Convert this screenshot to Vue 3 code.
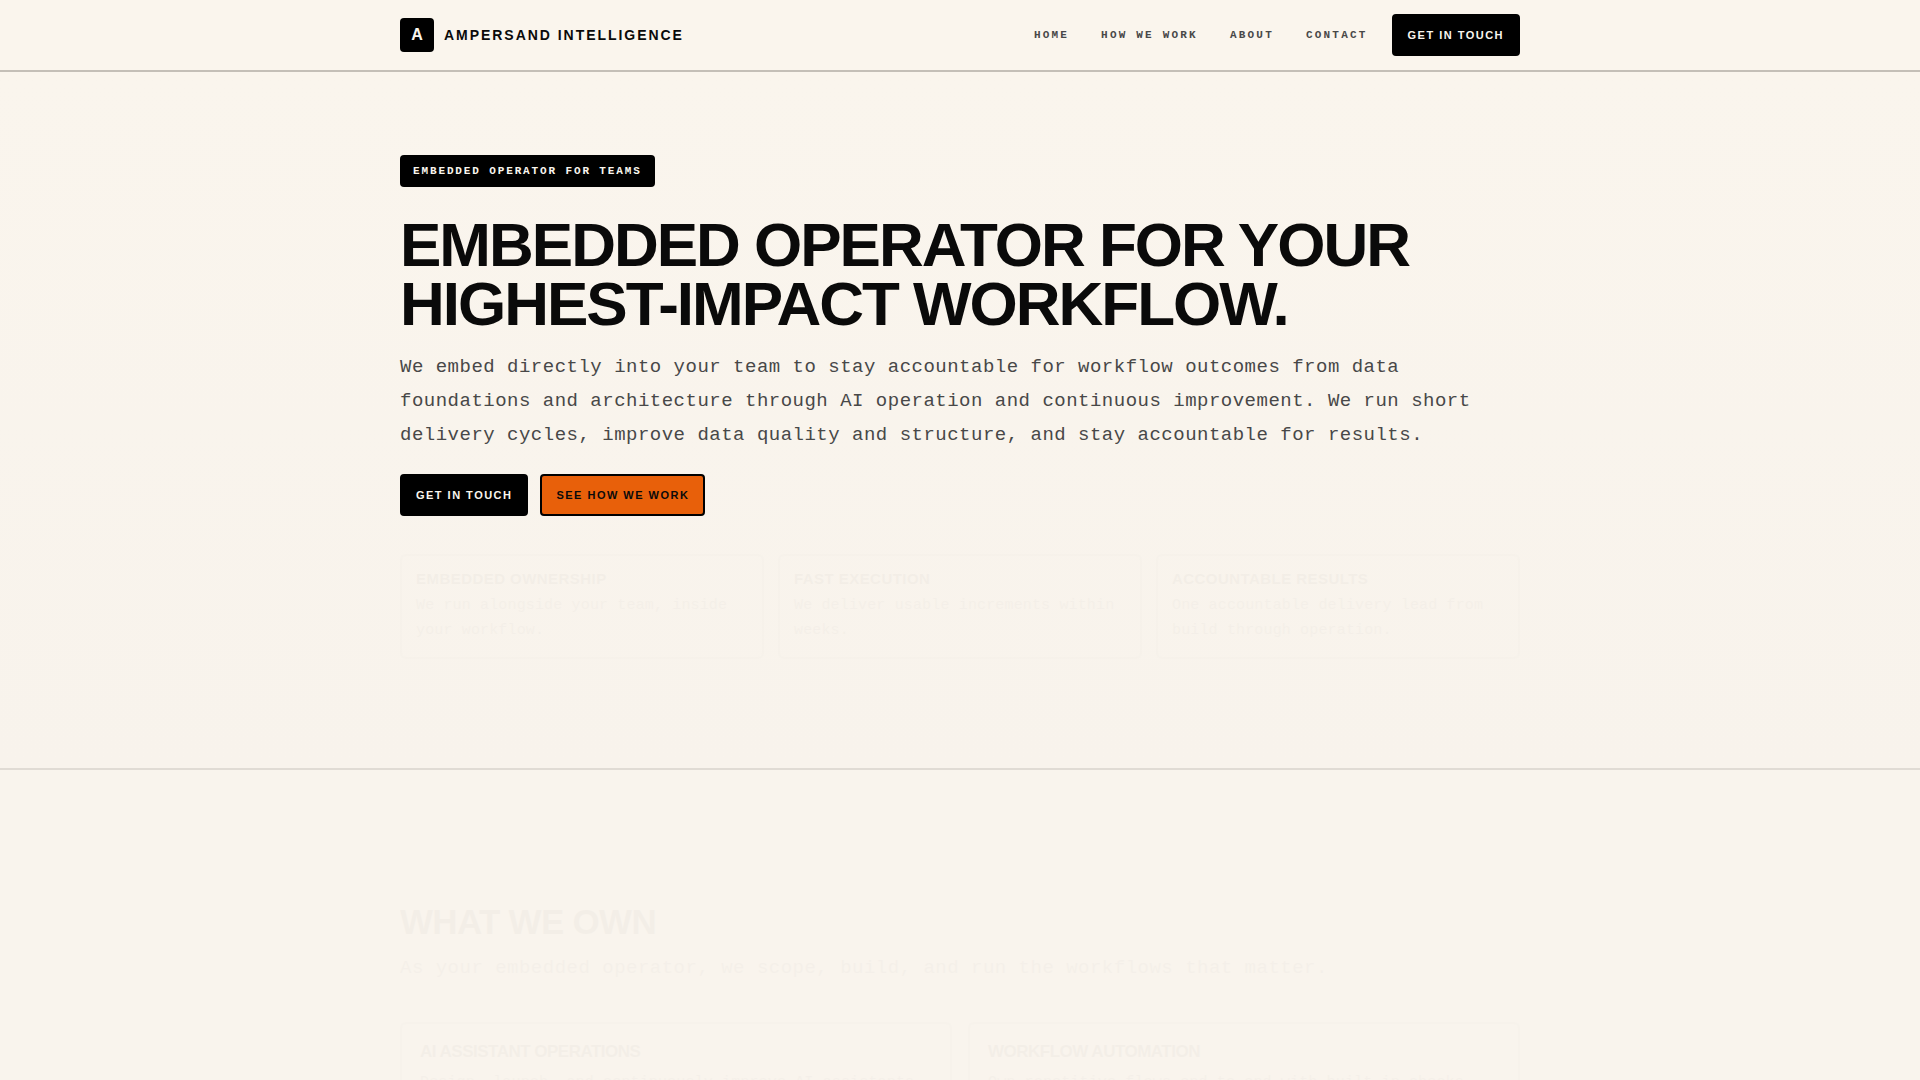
<script setup>
const links = ['Home', 'How we work', 'About', 'Contact']
const points = [
  { title: 'Embedded ownership', text: 'We run alongside your team, inside your workflow.' },
  { title: 'Fast execution', text: 'We deliver usable increments within weeks.' },
  { title: 'Accountable results', text: 'One accountable delivery lead from build through operation.' },
]
const services = [
  { title: 'AI assistant operations', text: 'Design, launch, and continuously improve AI assistants.' },
  { title: 'Workflow automation', text: 'Own repetitive flows end-to-end with built-in checks.' },
]
</script>

<template>
  <div class="page">
    <header class="header">
      <div class="container bar">
        <a class="brand" href="#">
          <span class="mark">A</span>
          <span class="name">Ampersand Intelligence</span>
        </a>
        <nav class="nav">
          <div class="links">
            <a v-for="link in links" :key="link" href="#">{{ link }}</a>
          </div>
          <button class="btn" type="button">Get in touch</button>
        </nav>
      </div>
    </header>
    <main>
      <section class="hero">
        <div class="container">
          <p class="badge">Embedded operator for teams</p>
          <h1>Embedded operator for your highest-impact workflow.</h1>
          <p class="lead">
            We embed directly into your team to stay accountable for workflow outcomes from data
            foundations and architecture through AI operation and continuous improvement. We run short
            delivery cycles, improve data quality and structure, and stay accountable for results.
          </p>
          <div class="actions">
            <button class="btn" type="button">Get in touch</button>
            <button class="btn accent" type="button">See how we work</button>
          </div>
          <div class="points reveal">
            <article v-for="p in points" :key="p.title" class="point">
              <h3>{{ p.title }}</h3>
              <p>{{ p.text }}</p>
            </article>
          </div>
        </div>
      </section>
      <section class="own">
        <div class="container reveal">
          <h2>What we own</h2>
          <p class="lead">As your embedded operator, we scope, build, and run the workflows that matter.</p>
          <div class="services">
            <article v-for="s in services" :key="s.title" class="service">
              <h3>{{ s.title }}</h3>
              <p>{{ s.text }}</p>
            </article>
          </div>
        </div>
      </section>
    </main>
  </div>
</template>

<style>
body {
  margin: 0;
  background: #f9f4ed;
}
</style>

<style scoped>
.page {
  height: 100vh;
  overflow: hidden;
  color: #0a0a0a;
  font-family: "Liberation Sans", Arial, sans-serif;
}
.container {
  box-sizing: border-box;
  max-width: 1168px;
  margin: 0 auto;
  padding: 0 24px;
}
h1, h2, h3, p {
  margin: 0;
}
h1, h2, h3, .name, .links, .badge, .btn {
  text-transform: uppercase;
}
.header {
  border-bottom: 2px solid #c4bfb7;
  background: #faf5ed;
}
.bar {
  display: flex;
  align-items: center;
  justify-content: space-between;
  height: 70px;
}
.brand {
  display: flex;
  align-items: center;
  gap: 10px;
  color: inherit;
  font-weight: 700;
  text-decoration: none;
}
.mark {
  display: grid;
  place-items: center;
  width: 34px;
  height: 34px;
  border-radius: 4px;
  background: #000;
  color: #faf6ee;
  font-size: 16px;
}
.name {
  font-size: 14px;
  letter-spacing: 0.14em;
}
.nav {
  display: flex;
  align-items: center;
  gap: 24px;
}
.links {
  display: flex;
  gap: 32px;
}
.links a {
  color: #484848;
  font: 700 11px/20px "Liberation Mono", monospace;
  letter-spacing: 0.2em;
  text-decoration: none;
}
.btn {
  height: 42px;
  padding: 0 14px;
  border: 2px solid #000;
  border-radius: 4px;
  background: #000;
  color: #faf6ee;
  font: 700 11px/20px "Liberation Sans", Arial, sans-serif;
  letter-spacing: 0.135em;
}
.accent {
  background: #e8600a;
  color: #0a0a0a;
}
.hero {
  padding: 83px 0 109px;
  border-bottom: 2px solid #e0dbd4;
  background: linear-gradient(#faf5ed, #f8f3ec);
}
.badge {
  width: fit-content;
  padding: 6px 13px;
  border-radius: 4px;
  background: #000;
  color: #faf6ee;
  font: 700 11px/20px "Liberation Mono", monospace;
  letter-spacing: 0.17em;
}
h1 {
  margin-top: 28px;
  font-size: 62px;
  line-height: 59px;
  letter-spacing: -2px;
}
.lead {
  color: #484848;
  font: 19px/34px "Liberation Mono", monospace;
  letter-spacing: 0.026em;
}
h1 + .lead {
  margin-top: 17px;
}
.actions {
  display: flex;
  gap: 12px;
  margin-top: 22px;
}
.reveal {
  opacity: 0.02;
}
.points {
  display: grid;
  grid-template-columns: repeat(3, 1fr);
  gap: 14px;
  margin-top: 38px;
}
.point {
  padding: 13px 14px 14px;
  border: 2px solid #bbb;
  border-radius: 6px;
}
.point h3 {
  margin-bottom: 4px;
  font-size: 15px;
  line-height: 20px;
  letter-spacing: 0.03em;
}
.point p, .service p {
  color: #484848;
  font: 15px/25px "Liberation Mono", monospace;
  letter-spacing: 0.01em;
}
.own {
  padding: 128px 0 0;
}
h2 {
  font-size: 35px;
  line-height: 48px;
  letter-spacing: -0.02em;
}
h2 + .lead {
  margin-top: 5px;
}
.services {
  display: grid;
  grid-template-columns: repeat(2, 1fr);
  gap: 16px;
  margin-top: 37px;
}
.service {
  padding: 16px 18px;
  border: 2px solid #bbb;
  border-radius: 6px;
}
.service h3 {
  margin-bottom: 6px;
  font-size: 17px;
  line-height: 24px;
  letter-spacing: -0.03em;
}
</style>
